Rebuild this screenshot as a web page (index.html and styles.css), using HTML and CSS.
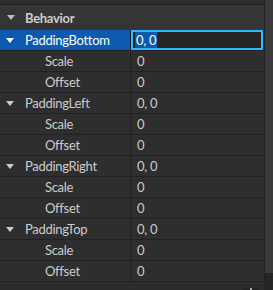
FILE: index.html
```html
<!DOCTYPE html>
<html>
<head>
<meta charset="utf-8">
<link rel="stylesheet" href="styles.css">
</head>
<body>
<div class="panel">
  <div class="list">
    <div class="stub"></div>
    <div class="header"><span class="tri"></span><span class="htext">Behavior</span></div>
    <div class="row selected">
      <div class="name"><span class="tri"></span>PaddingBottom</div>
      <div class="value"><div class="edit"><span class="sel">0, 0</span></div></div>
    </div>
    <div class="row"><div class="name sub">Scale</div><div class="value">0</div></div>
    <div class="row"><div class="name sub">Offset</div><div class="value">0</div></div>
    <div class="row"><div class="name"><span class="tri"></span>PaddingLeft</div><div class="value">0, 0</div></div>
    <div class="row"><div class="name sub">Scale</div><div class="value">0</div></div>
    <div class="row"><div class="name sub">Offset</div><div class="value">0</div></div>
    <div class="row"><div class="name"><span class="tri"></span>PaddingRight</div><div class="value">0, 0</div></div>
    <div class="row"><div class="name sub">Scale</div><div class="value">0</div></div>
    <div class="row"><div class="name sub">Offset</div><div class="value">0</div></div>
    <div class="row"><div class="name"><span class="tri"></span>PaddingTop</div><div class="value">0, 0</div></div>
    <div class="row"><div class="name sub">Scale</div><div class="value">0</div></div>
    <div class="row"><div class="name sub">Offset</div><div class="value">0</div></div>
    <div class="footer"><span class="grip"></span></div>
  </div>
  <div class="scrollbar"><div class="thumb"></div></div>
</div>
</body>
</html>
```
FILE: styles.css
```css
* { box-sizing: border-box; }
html, body { margin: 0; padding: 0; background: #2e2e2e; }
body { font-family: Lato, "Noto Sans", sans-serif; font-size: 13px; letter-spacing: -0.3px; color: #cccccc; width: 273px; height: 290px; overflow: hidden; }
.panel { display: flex; height: 290px; }
.list { width: 264px; display: flex; flex-direction: column; background: #2e2e2e; }
.stub { height: 5px; border-bottom: 1px solid #222222; flex: none; }
.header { height: 25px; background: #353535; display: flex; align-items: center; padding-left: 7px; flex: none; }
.header .tri { margin-right: 10px; border-top-color: #bbbbbb; }
.htext { font-weight: bold; color: #cccccc; }
.tri { width: 0; height: 0; border-left: 4px solid transparent; border-right: 4px solid transparent; border-top: 5px solid #cccccc; display: inline-block; flex: none; }
.row { height: 21px; display: flex; border-bottom: 1px solid #222222; flex: none; }
.name { width: 131px; display: flex; align-items: center; padding-left: 6px; border-right: 1px solid #222222; white-space: nowrap; }
.name .tri { margin-right: 11px; }
.name.sub { padding-left: 45px; }
.value { flex: 1; display: flex; align-items: center; padding-left: 6px; color: #cccccc; }
.selected .name { background: #0b5aaf; color: #ffffff; }
.selected .name .tri { border-top-color: #ffffff; }
.selected .value { padding: 0 1px 0 0; }
.edit { width: 100%; height: 20px; border: 2px solid #35b5ff; background: #252525; display: flex; align-items: center; padding-left: 2px; color: #ffffff; }
.sel { background: #0b5aaf; line-height: 16px; padding: 0 1px; }
.footer { flex: 1; background: #2b2b2b; position: relative; }
.grip { position: absolute; left: 243px; width: 15px; top: 6px; height: 4px; background: #242424; }
.grip::after { content: ""; position: absolute; left: 7px; top: 0; width: 2px; height: 4px; background: #aaaaaa; }
.scrollbar { width: 9px; border-left: 1px solid #222222; background: #262626; display: flex; flex-direction: column; }
.thumb { height: 273px; background: #3a3a3a; }
```
